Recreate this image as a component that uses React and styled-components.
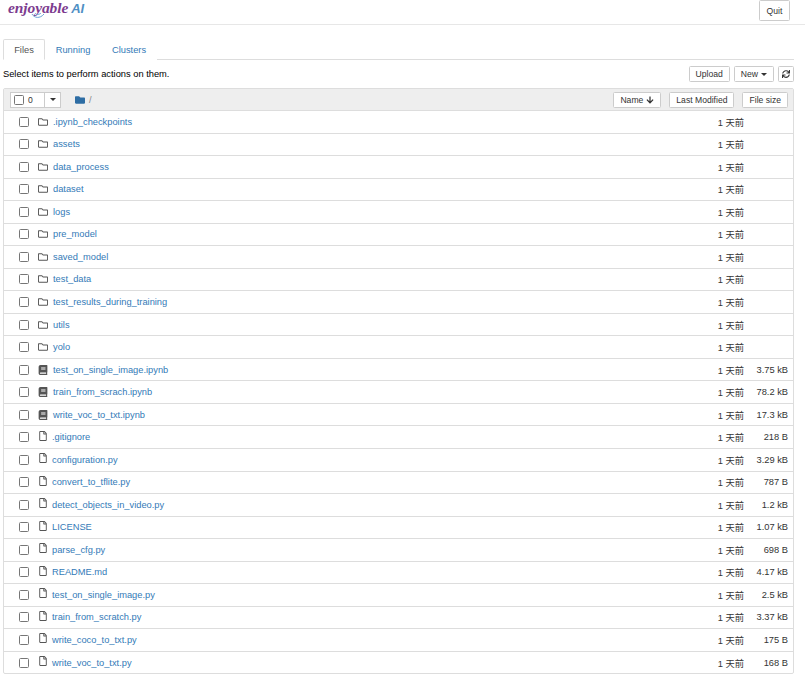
import React from 'react';
import styled, { createGlobalStyle } from 'styled-components';
import { FaRegFolder, FaBook, FaRegFile, FaFolder, FaArrowDown, FaSync } from 'react-icons/fa';

const GlobalStyle = createGlobalStyle`
  html, body {
    margin: 0;
    padding: 0;
    background: #fff;
    font-family: "Liberation Sans", Arial, sans-serif;
    font-size: 9.3px;
    color: #000;
  }
  * {
    box-sizing: border-box;
  }
`;

const Header = styled.header`
  height: 25px;
  display: flex;
  justify-content: space-between;
  padding: 0 15px 0 8px;
  border-bottom: 1px solid #e7e7e7;
`;

const Logo = styled.div`
  position: relative;
  height: 20px;
  display: flex;
  align-items: baseline;
  gap: 3px;
  font-family: "Liberation Serif", serif;
  font-style: italic;
  font-weight: 700;
  font-size: 15.5px;
  line-height: 15px;
  color: #7d3c8f;
  letter-spacing: -0.1px;
`;

const LogoAi = styled.span`
  font-family: "Liberation Sans", sans-serif;
  font-size: 13px;
  color: #4f8fc4;
`;

const Swirl = styled.svg`
  position: absolute;
  left: 23px;
  top: 11px;
  width: 14px;
  height: 9px;
`;

const Button = styled.button`
  background: #fff;
  border: 1px solid #ccc;
  border-radius: 1.5px;
  color: #333;
  font: inherit;
  font-size: 8.6px;
  padding: 0 6px;
  height: ${(p) => p.$h || 16}px;
  display: inline-flex;
  align-items: center;
  justify-content: center;
  gap: 3px;
  white-space: nowrap;
`;

const QuitButton = styled(Button)`
  width: 31px;
  height: 21px;
  margin-top: 0;
`;

const Main = styled.main`
  padding: 14px 11px 0 3px;
`;

const Tabs = styled.nav`
  display: flex;
  height: 21px;
  border-bottom: 1px solid #ddd;
`;

const Tab = styled.a`
  height: 21px;
  padding: 0 11px;
  width: ${(p) => p.$w}px;
  display: flex;
  align-items: center;
  justify-content: center;
  color: ${(p) => (p.$active ? '#555' : '#337ab7')};
  background: #fff;
  border: 1px solid ${(p) => (p.$active ? '#ddd' : 'transparent')};
  border-bottom-color: ${(p) => (p.$active ? '#fff' : 'transparent')};
  border-radius: 2px 2px 0 0;
`;

const Toolbar = styled.div`
  display: flex;
  justify-content: space-between;
  align-items: center;
  height: 28px;
  padding-top: 0;
`;

const Hint = styled.span`
  color: #000;
`;

const Actions = styled.div`
  display: flex;
  gap: 4px;
  margin-top: 0;
`;

const Caret = styled.span`
  display: inline-block;
  border-top: 3px solid currentColor;
  border-left: 3px solid transparent;
  border-right: 3px solid transparent;
`;

const List = styled.section`
  border: 1px solid #ddd;
  border-radius: 2px;
  margin-top: 0;
`;

const ListHeader = styled.div`
  height: 21px;
  background: #eee;
  display: flex;
  align-items: center;
  padding: 0 5px 0 6px;
  color: #333;
`;

const SelectGroup = styled.div`
  display: flex;
  height: 16px;
`;

const SelectBox = styled.div`
  width: 35px;
  height: 16px;
  background: #fff;
  border: 1px solid #ccc;
  display: flex;
  align-items: flex-start;
  padding: 2px 0 0 3px;
  gap: 4px;
  font-size: 8.6px;
  color: #333;
`;

const SelectDrop = styled.div`
  width: 17px;
  height: 16px;
  margin-left: -1px;
  background: #fff;
  border: 1px solid #ccc;
  display: flex;
  align-items: center;
  justify-content: center;
  color: #333;
`;

const Check = styled.span`
  display: block;
  width: 10px;
  height: 10px;
  flex: none;
  background: #fff;
  border: 1.3px solid #767676;
  border-radius: 1.5px;
`;

const Crumb = styled.div`
  display: flex;
  align-items: center;
  gap: 4px;
  margin-left: 14px;
  color: #888;
  svg {
    color: #2e6da4;
    font-size: 10px;
  }
`;

const Sorters = styled.div`
  margin-left: auto;
  display: flex;
  gap: 8px;
`;

const Row = styled.div`
  height: 22.54px;
  display: flex;
  align-items: center;
  padding-left: 15px;
  border-top: 1px solid #ddd;
`;

const IconSlot = styled.span`
  width: 13px;
  margin-left: 9px;
  margin-right: 1px;
  display: flex;
  color: #555;
  font-size: 10px;
  position: relative;
  top: ${(p) => (p.$file ? -1.5 : 0)}px;
`;

const Name = styled.a`
  color: #337ab7;
  margin-left: ${(p) => (p.$file ? 0 : 1)}px;
  flex: 1;
`;

const Modified = styled.span`
  width: 80px;
  text-align: right;
  color: #333;
  font-family: "Liberation Sans", "Noto Sans CJK SC", sans-serif;
  margin-right: 0;
`;

const Size = styled.span`
  width: 49px;
  padding-right: 5px;
  text-align: right;
  color: #333;
`;

const files = [
  ['.ipynb_checkpoints', 'folder', ''],
  ['assets', 'folder', ''],
  ['data_process', 'folder', ''],
  ['dataset', 'folder', ''],
  ['logs', 'folder', ''],
  ['pre_model', 'folder', ''],
  ['saved_model', 'folder', ''],
  ['test_data', 'folder', ''],
  ['test_results_during_training', 'folder', ''],
  ['utils', 'folder', ''],
  ['yolo', 'folder', ''],
  ['test_on_single_image.ipynb', 'book', '3.75 kB'],
  ['train_from_scrach.ipynb', 'book', '78.2 kB'],
  ['write_voc_to_txt.ipynb', 'book', '17.3 kB'],
  ['.gitignore', 'file', '218 B'],
  ['configuration.py', 'file', '3.29 kB'],
  ['convert_to_tflite.py', 'file', '787 B'],
  ['detect_objects_in_video.py', 'file', '1.2 kB'],
  ['LICENSE', 'file', '1.07 kB'],
  ['parse_cfg.py', 'file', '698 B'],
  ['README.md', 'file', '4.17 kB'],
  ['test_on_single_image.py', 'file', '2.5 kB'],
  ['train_from_scratch.py', 'file', '3.37 kB'],
  ['write_coco_to_txt.py', 'file', '175 B'],
  ['write_voc_to_txt.py', 'file', '168 B'],
];

const icons = { folder: FaRegFolder, book: FaBook, file: FaRegFile };

const App = () => (
  <>
    <GlobalStyle />
    <Header>
      <Logo>
        enjoyable
        <LogoAi>AI</LogoAi>
        <Swirl viewBox="0 0 14 9">
          <path d="M1 3c2 4 8 5 12 0M4 2c1 2 4 2 6 0" fill="none" stroke="#6aa5d6" strokeWidth="1" />
        </Swirl>
      </Logo>
      <QuitButton>Quit</QuitButton>
    </Header>
    <Main>
      <Tabs>
        <Tab $active $w={42}>Files</Tab>
        <Tab $w={56}>Running</Tab>
        <Tab $w={56}>Clusters</Tab>
      </Tabs>
      <Toolbar>
        <Hint>Select items to perform actions on them.</Hint>
        <Actions>
          <Button>Upload</Button>
          <Button>New <Caret /></Button>
          <Button style={{ padding: '0 3px' }}><FaSync size={8} /></Button>
        </Actions>
      </Toolbar>
      <List>
        <ListHeader>
          <SelectGroup>
            <SelectBox><Check />0</SelectBox>
            <SelectDrop><Caret /></SelectDrop>
          </SelectGroup>
          <Crumb><FaFolder />/</Crumb>
          <Sorters>
            <Button>Name <FaArrowDown size={8} /></Button>
            <Button>Last Modified</Button>
            <Button>File size</Button>
          </Sorters>
        </ListHeader>
        {files.map(([name, kind, size]) => {
          const Icon = icons[kind];
          return (
            <Row key={name}>
              <Check />
              <IconSlot $file={kind === 'file'}><Icon /></IconSlot>
              <Name $file={kind === 'file'}>{name}</Name>
              <Modified>1 天前</Modified>
              <Size>{size}</Size>
            </Row>
          );
        })}
      </List>
    </Main>
  </>
);

export default App;
